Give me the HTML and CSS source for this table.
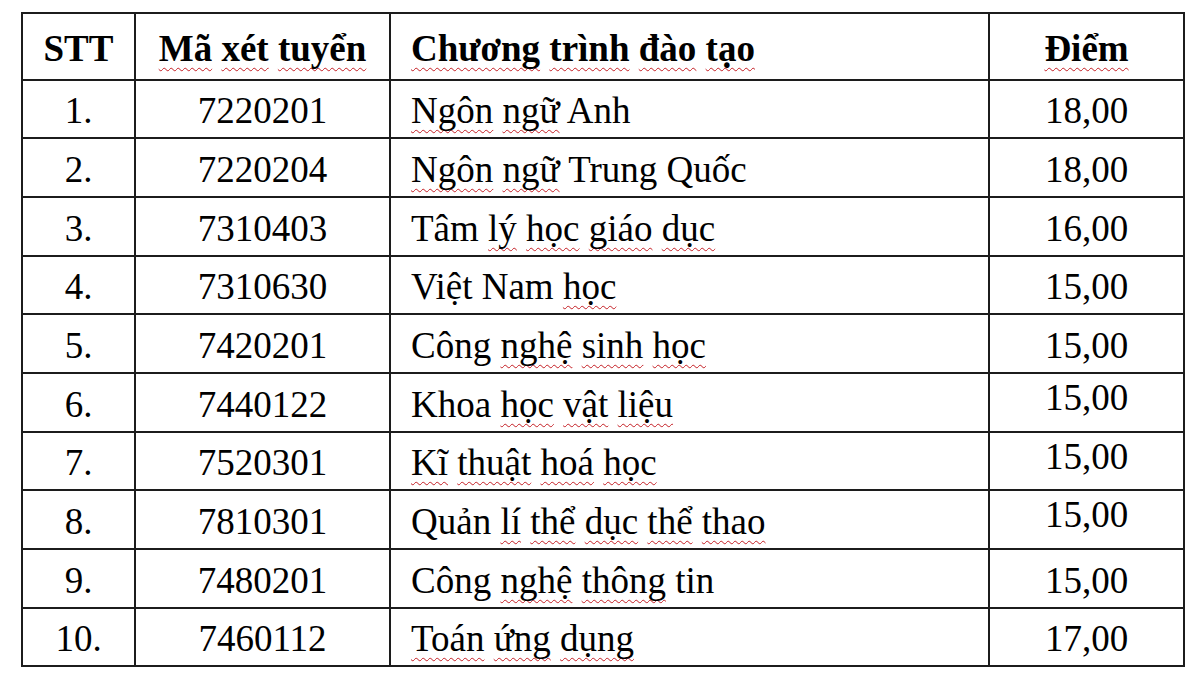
FILE: index.html
```html
<!DOCTYPE html>
<html lang="vi">
<head>
<meta charset="utf-8">
<title>Điểm chuẩn</title>
<link rel="stylesheet" href="styles.css">
</head>
<body>
<div class="page">
<table class="scores">
  <colgroup>
    <col class="c-stt">
    <col class="c-code">
    <col class="c-name">
    <col class="c-pt">
  </colgroup>
  <thead>
    <tr>
      <th class="center">STT</th>
      <th class="center"><span class="sp">Mã</span> <span class="sp">xét</span> <span class="sp">tuyển</span></th>
      <th class="left"><span class="sp">Chương</span> <span class="sp">trình</span> <span class="sp">đào</span> <span class="sp">tạo</span></th>
      <th class="center"><span class="sp">Điểm</span></th>
    </tr>
  </thead>
  <tbody>
    <tr><td class="center">1.</td><td class="center">7220201</td><td class="left"><span class="sp">Ngôn</span> <span class="sp">ngữ</span> Anh</td><td class="center">18,00</td></tr>
    <tr><td class="center">2.</td><td class="center">7220204</td><td class="left"><span class="sp">Ngôn</span> <span class="sp">ngữ</span> Trung Quốc</td><td class="center">18,00</td></tr>
    <tr><td class="center">3.</td><td class="center">7310403</td><td class="left">Tâm <span class="sp">lý</span> <span class="sp">học</span> <span class="sp">giáo</span> <span class="sp">dục</span></td><td class="center">16,00</td></tr>
    <tr><td class="center">4.</td><td class="center">7310630</td><td class="left">Việt Nam <span class="sp">học</span></td><td class="center">15,00</td></tr>
    <tr><td class="center">5.</td><td class="center">7420201</td><td class="left">Công <span class="sp">nghệ</span> <span class="sp">sinh</span> <span class="sp">học</span></td><td class="center">15,00</td></tr>
    <tr><td class="center">6.</td><td class="center">7440122</td><td class="left">Khoa <span class="sp">học</span> <span class="sp">vật</span> <span class="sp">liệu</span></td><td class="center raised">15,00</td></tr>
    <tr><td class="center">7.</td><td class="center">7520301</td><td class="left"><span class="sp">Kĩ</span> <span class="sp">thuật</span> <span class="sp">hoá</span> <span class="sp">học</span></td><td class="center raised">15,00</td></tr>
    <tr><td class="center">8.</td><td class="center">7810301</td><td class="left">Quản <span class="sp">lí</span> <span class="sp">thể</span> <span class="sp">dục</span> <span class="sp">thể</span> <span class="sp">thao</span></td><td class="center raised">15,00</td></tr>
    <tr><td class="center">9.</td><td class="center">7480201</td><td class="left">Công <span class="sp">nghệ</span> <span class="sp">thông</span> tin</td><td class="center">15,00</td></tr>
    <tr><td class="center">10.</td><td class="center">7460112</td><td class="left"><span class="sp">Toán</span> <span class="sp">ứng</span> <span class="sp">dụng</span></td><td class="center">17,00</td></tr>
  </tbody>
</table>
</div>
</body>
</html>
```
FILE: styles.css
```css
html, body {
  margin: 0;
  padding: 0;
  background: #ffffff;
}

.page {
  padding: 12px 0 0 21px;
}

.scores {
  border-collapse: collapse;
  table-layout: fixed;
  width: 1162px;
  font-family: "Liberation Serif", "Times New Roman", serif;
  font-size: 37px;
  line-height: 41px;
  color: #000;
}

.c-stt { width: 113px; }
.c-code { width: 255px; }
.c-name { width: 599px; }
.c-pt { width: 195px; }

.scores th,
.scores td {
  border: 2px solid #1c1c1c;
  padding: 0;
  vertical-align: top;
  white-space: nowrap;
}

.scores th {
  font-weight: bold;
  padding-top: 14px;
  height: 50.6px;
}

.scores td {
  font-weight: normal;
  padding-top: 9.8px;
  height: 46.87px;
}

.center { text-align: center; }
.scores .left { text-align: left; padding-left: 20px; }

.scores td.raised {
  padding-top: 3px;
  height: 53.67px;
}

.sp {
  text-decoration-line: underline;
  text-decoration-style: wavy;
  text-decoration-color: #c41e24;
  text-decoration-thickness: 1px;
  text-underline-offset: 6px;
  text-decoration-skip-ink: none;
}
```
